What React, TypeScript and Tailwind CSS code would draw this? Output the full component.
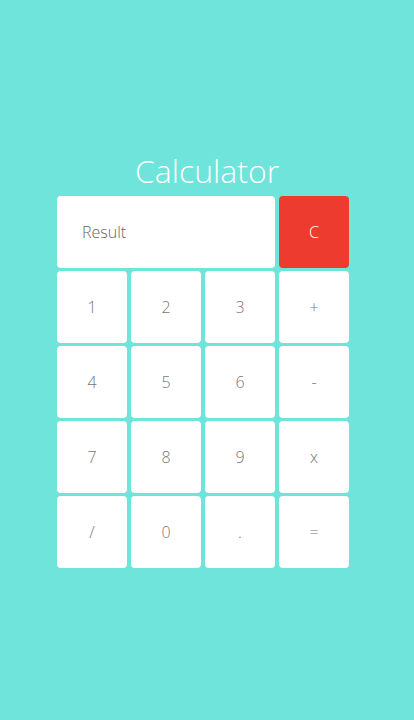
import React from 'react';

const keys = ['1', '2', '3', '+', '4', '5', '6', '-', '7', '8', '9', 'x', '/', '0', '.', '='];

export default function App() {
    return (
        <div className="min-h-screen bg-[#6ee4da] pt-[151px]" style={{ fontFamily: '"Open Sans", sans-serif' }}>
            <h1 className="text-center text-[32px] leading-[40px] font-light text-white">Calculator</h1>
            <div className="w-[300px] mx-auto mt-[5px] grid grid-cols-[repeat(4,70px)] gap-x-[4px] gap-y-[3px]">
                <div className="col-span-3 h-[72px] bg-white rounded-[4px] flex items-center pl-[25px] text-[16px] font-light text-[#666]">
                    Result
                </div>
                <button className="h-[72px] bg-[#ee3b2f] rounded-[4px] text-white text-[16px] font-light">C</button>
                {keys.map((k) => (
                    <button key={k} className="h-[72px] bg-white rounded-[4px] text-[16px] font-light text-[#777]">
                        {k}
                    </button>
                ))}
            </div>
        </div>
    );
}
